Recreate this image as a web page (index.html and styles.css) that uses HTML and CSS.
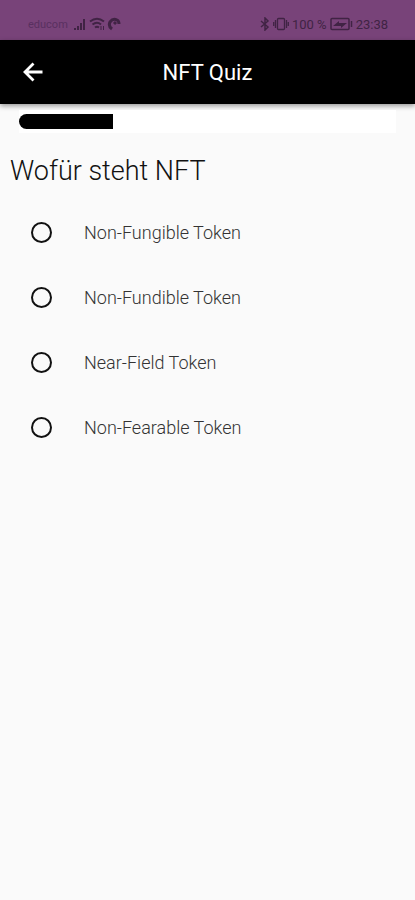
FILE: index.html
```html
<!DOCTYPE html>
<html lang="de">
<head>
<meta charset="utf-8">
<meta name="viewport" content="width=device-width, initial-scale=1">
<title>NFT Quiz</title>
<link rel="stylesheet" href="styles.css">
</head>
<body>
<div class="status">
  <div class="status-group status-left">
    <span class="carrier">educom</span>
    <svg class="signal" width="14" height="14" viewBox="0 0 14 14" fill="currentColor" aria-hidden="true"><path d="M1 11h2v2H1zM4 9h2v4H4zM7 6h2v7H7zM10 2h2v11h-2z"/></svg>
    <svg width="16" height="14" viewBox="0 0 16 14" fill="none" stroke="currentColor" stroke-width="2" aria-hidden="true"><path d="M1 4.500Q8-1 15 4.500M3.500 7.500Q8 4 12 7.500M6 10.500Q8 9 10 10.500"/><path d="M12 9v4M14.500 9v4" stroke-width="1"/></svg>
    <svg width="14" height="14" viewBox="0 0 14 14" fill="none" stroke="currentColor" stroke-width="3" aria-hidden="true"><path d="M5 12Q1 9 3 5Q6 1 10 3Q12 4 12 7M7 7l2-2"/></svg>
  </div>
  <div class="status-group">
    <svg width="10" height="14" viewBox="0 0 10 14" fill="none" stroke="currentColor" stroke-width="1.500" aria-hidden="true"><path d="M1 4l7 6-3 3V1l3 3-7 6"/></svg>
    <svg width="16" height="14" viewBox="0 0 16 14" fill="none" stroke="currentColor" stroke-width="1.300" aria-hidden="true"><rect x="4.500" y="1.500" width="7" height="11" rx="1"/><path d="M2.500 3v8M13.500 3v8M.7 5v4M15.300 5v4"/></svg>
    <span>100 %</span>
    <svg width="23" height="14" viewBox="0 0 23 14" fill="none" stroke="currentColor" stroke-width="1.500" aria-hidden="true"><rect x="1" y="1.500" width="18" height="11" rx="1"/><path d="M21.500 4v6"/><path d="M3 9l6-5v2h8l-6 5V9z" fill="currentColor" stroke="none"/></svg>
    <span>23:38</span>
  </div>
</div>
<header class="bar">
  <button class="back" type="button" aria-label="Zurück">
    <svg width="24" height="24" viewBox="0 0 24 24" fill="none" stroke="currentColor" stroke-width="2.800" aria-hidden="true"><path d="M21.500 12H4M12.500 3.500L4 12l8.500 8.500"/></svg>
  </button>
  <h1 class="title">NFT Quiz</h1>
</header>
<main>
  <div class="track"><progress class="progress" value="25" max="100" aria-label="Fortschritt"></progress></div>
  <fieldset class="quiz">
    <legend class="question">Wofür steht NFT</legend>
    <label class="option"><input class="radio" type="radio" name="answer"><span>Non-Fungible Token</span></label>
    <label class="option"><input class="radio" type="radio" name="answer"><span>Non-Fundible Token</span></label>
    <label class="option"><input class="radio" type="radio" name="answer"><span>Near-Field Token</span></label>
    <label class="option"><input class="radio" type="radio" name="answer"><span>Non-Fearable Token</span></label>
  </fieldset>
</main>
</body>
</html>
```
FILE: styles.css
```css
* { box-sizing: border-box; }
body {
  margin: 0;
  background: #fafafa;
  color: #111;
  font-family: Roboto, "Open Sans", sans-serif;
}
.status {
  display: flex;
  justify-content: space-between;
  align-items: center;
  height: 40px;
  padding: 8px 27px 0 28px;
  background: #784379;
  color: #402344;
  font-size: 13px;
}
.status-group { display: flex; align-items: center; gap: 3px; }
.status-left { gap: 2px; }
.carrier { color: #593060; font-size: 11px; }
.signal { margin-left: 3px; }
.bar {
  display: grid;
  grid-template-columns: 48px 1fr 48px;
  align-items: center;
  height: 64px;
  padding: 0 9px;
  background: #000;
  color: #fff;
  box-shadow: 0 2px 5px rgba(0, 0, 0, .4);
}
.back {
  display: flex;
  align-items: center;
  justify-content: center;
  height: 48px;
  padding: 0;
  border: 0;
  background: none;
  color: inherit;
}
.title {
  margin: 0;
  padding-top: 2px;
  text-align: center;
  font-size: 22px;
  font-weight: 400;
  line-height: 32px;
}
.track {
  margin: 6px 19px 0;
  padding: 4px 0;
  background: #fff;
}
.progress {
  appearance: none;
  display: block;
  width: 100%;
  height: 15px;
  border: 0;
  border-radius: 8px 0 0 8px;
  overflow: hidden;
  background: #fff;
}
.progress::-webkit-progress-bar { background: #fff; }
.progress::-webkit-progress-value { background: #000; }
.quiz { margin: 0; padding: 0; border: 0; }
.question {
  padding: 21px 10px 12px;
  font-size: 27px;
  font-weight: 300;
  line-height: 34px;
}
.option {
  display: flex;
  align-items: center;
  gap: 32px;
  min-height: 65px;
  padding: 0 31px;
  color: #333;
  font-size: 18px;
  font-weight: 300;
}
.radio {
  appearance: none;
  width: 21px;
  height: 21px;
  margin: 0;
  border: 2px solid #111;
  border-radius: 50%;
}
.radio:checked { box-shadow: inset 0 0 0 3px #fafafa; background: #111; }
```
